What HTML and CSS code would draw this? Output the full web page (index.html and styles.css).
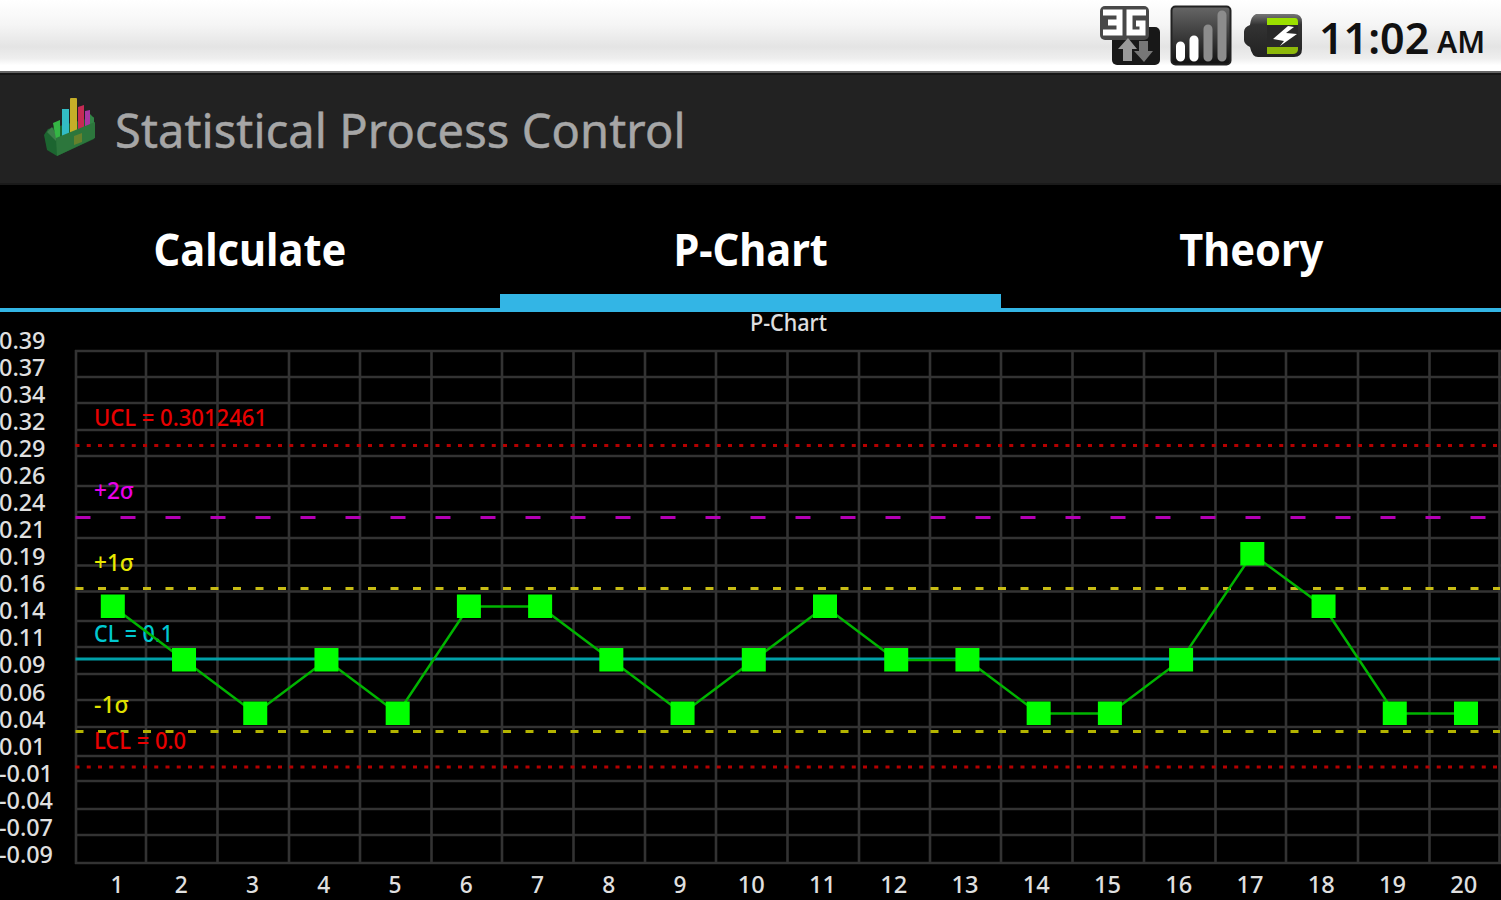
FILE: index.html
```html
<!DOCTYPE html>
<html lang="en">
<head>
    <meta charset="UTF-8">
    <meta name="viewport" content="width=device-width, initial-scale=1.0">
    <title>Statistical Process Control</title>
    <link rel="stylesheet" href="styles.css">
</head>
<body>
    <!-- Status bar -->
    <div class="status-bar">
        <svg class="status-icons" width="210" height="72" viewBox="0 0 210 72">
            <defs>
                <linearGradient id="dark" x1="0" y1="0" x2="0" y2="1">
                    <stop offset="0" stop-color="#666"/>
                    <stop offset="1" stop-color="#111"/>
                </linearGradient>
                <linearGradient id="shell" x1="0" y1="0" x2="0" y2="1">
                    <stop offset="0" stop-color="#777"/>
                    <stop offset="0.25" stop-color="#333"/>
                    <stop offset="1" stop-color="#222"/>
                </linearGradient>
            </defs>
            <!-- 3G data -->
            <rect x="12" y="27" width="48" height="38" rx="5" fill="#181818"/>
            <rect x="0" y="6" width="49" height="34" rx="5" fill="#484848"/>
            <path d="M3 12.500H19.500V32.500H3M8 22.500H19" fill="none" stroke="#fff" stroke-width="6"/>
            <path d="M46 12.500H29.500V32.500H42.500V23.500H36" fill="none" stroke="#fff" stroke-width="6"/>
            <path d="M28 38L37 49H32V61H23V49H18Z" fill="#999"/>
            <path d="M39 41H48V51H53L44 62L34 51H39Z" fill="#777"/>
            <!-- Signal -->
            <rect x="71.500" y="6.500" width="59" height="58" rx="4" fill="url(#dark)" stroke="#222" stroke-width="2"/>
            <g stroke-width="9" stroke-linecap="round">
                <path d="M80.500 46V57M94 40V57" stroke="#fff"/>
                <path d="M108 29V57M122 15V57" stroke="#8c8c8c"/>
            </g>
            <!-- Battery -->
            <path d="M156 14H194Q202 14 202 22V49Q202 57 194 57H158Q152 57 150 47Q144 44 144 40V32Q144 27 150 25Q151 16 156 14Z" fill="url(#shell)"/>
            <path d="M167 18H195Q198 18 198 22V25H167Z" fill="#9be000"/>
            <path d="M167 47H198V50Q197 54 193 54H167Z" fill="#8db80a"/>
            <rect x="167" y="25" width="31" height="22" fill="#292929"/>
            <path d="M188 26L173 39L184 41L180 46L197 34L186 33L194 27Z" fill="#fff"/>
        </svg>
        <span class="clock">11:02</span>
        <span class="meridiem">AM</span>
    </div>

    <!-- Title bar -->
    <div class="title-bar">
        <svg class="app-icon" width="54" height="62" viewBox="0 0 54 62">
            <path d="M0 39L4 33L50 21V43L13 60L3 54Z" fill="#1c6530"/>
            <path d="M3 36L8 31L12 38L12 45Z" fill="#3c7d49"/>
            <path d="M9 27L16 24V43H12Z" fill="#35b545"/>
            <rect x="18" y="13" width="7" height="28" fill="#32bcc5"/>
            <rect x="26" y="2" width="7" height="37" rx="1" fill="#c5ae28"/>
            <path d="M34 11L40 9V34H34Z" fill="#c62b54"/>
            <path d="M41 15L46 14V32H41Z" fill="#a936a2"/>
            <path d="M46 18L50 22V31H46Z" fill="#328446"/>
            <path d="M12 42L51 26V42L13 60Z" fill="#2c763c"/>
            <path d="M30 40L38 37V46L30 49Z" fill="#66812c"/>
        </svg>
        <h1>Statistical Process Control</h1>
    </div>

    <!-- Tabs -->
    <div class="tabs">
        <div class="tab"><span>Calculate</span></div>
        <div class="tab active"><span>P-Chart</span></div>
        <div class="tab"><span>Theory</span></div>
    </div>

    <svg class="chart" id="chart" width="1501" height="588" viewBox="0 312 1501 588"></svg>

    <script src="chart.js"></script>
</body>
</html>
```
FILE: styles.css
```css
/* Body styles */
body {
    margin: 0;
    background: #000;
    color: #fff;
    font-family: "Noto Sans", "Open Sans", sans-serif;
    overflow: hidden;
}

/* Status bar */
.status-bar {
    box-sizing: border-box;
    height: 73px;
    display: flex;
    justify-content: flex-end;
    padding-right: 15px;
    background: linear-gradient(#fff 0%, #f5f5f5 35%, #e4e4e4 66%, #eee 82%, #fff 92%);
    border-bottom: 2px solid #666;
    color: #111;
    line-height: 75px;
}

.status-icons {
    margin-right: 9px;
}

.clock {
    width: 112px;
    font-size: 43px;
    font-weight: 600;
    white-space: nowrap;
}

.meridiem {
    width: 49px;
    margin-left: 6px;
    font-size: 30px;
    font-weight: 600;
    line-height: 83px;
}

/* Title bar */
.title-bar {
    box-sizing: border-box;
    height: 112px;
    display: flex;
    align-items: center;
    padding-left: 44px;
    background: #222;
    border-top: 2px solid #161616;
    border-bottom: 2px solid #1a1a1a;
}

.app-icon {
    margin-top: -4px;
}

h1 {
    margin: 0 0 0 17px;
    font-size: 47px;
    font-weight: 400;
    letter-spacing: 0.1px;
    line-height: 64px;
    padding-top: 2px;
    color: #a6a6a6;
    -webkit-text-stroke: 0.5px #a6a6a6;
    white-space: nowrap;
}

/* Tabs */
.tabs {
    box-sizing: border-box;
    height: 127px;
    display: flex;
    border-bottom: 4px solid #33b5e5;
}

.tab {
    box-sizing: border-box;
    flex: 1;
    height: 123px;
    border-bottom: 14px solid transparent;
    font-size: 44px;
    font-weight: 700;
    line-height: 128px;
    text-align: center;
}

.tab.active {
    border-bottom-color: #33b5e5;
}

.tab span {
    display: inline-block;
    transform: scaleX(0.945);
}

/* Chart */
.chart {
    display: block;
    overflow: visible;
}

.chart text {
    font-size: 23.5px;
    font-weight: 500;
}

.grid {
    stroke: #333;
    stroke-width: 2.6;
}

.axis {
    fill: #e0e0e0;
}

.series {
    fill: none;
    stroke: #00b400;
    stroke-width: 2.5;
}

.point {
    fill: #0f0;
}
```
FILE: chart.js
```javascript
const chart = document.getElementById('chart');

const xs = [76, 146, 217.5, 289, 360, 431.5, 502, 573.5, 645, 716, 787.5, 859, 930, 1001, 1072.5, 1144, 1215.5, 1286, 1358, 1429.5, 1499.5];
const ys = [351, 377, 403, 430, 456, 486, 512, 538, 565.5, 591.5, 621, 647, 674, 700, 727, 756, 781, 809, 835, 863];

const yLabels = ['0.39', '0.37', '0.34', '0.32', '0.29', '0.26', '0.24', '0.21', '0.19', '0.16', '0.14', '0.11', '0.09', '0.06', '0.04', '0.01', '-0.01', '-0.04', '-0.07', '-0.09'];
const samples = [3, 2, 1, 2, 1, 3, 3, 2, 1, 2, 3, 2, 2, 1, 1, 2, 4, 3, 1, 1];
const levels = { 1: 713.5, 2: 660, 3: 606.5, 4: 554 };

// Control limits: label, label width, label baseline, line y, colours, dash pattern
const limits = [
    ['UCL = 0.3012461', 173, 426, 445.5, '#e80000', '#b40000', '4 7.25'],
    ['+2σ', 40, 499, 517.5, '#e800e8', '#b400b4', '15 30'],
    ['+1σ', 40, 571, 588.5, '#e8e800', '#c8bc14', '8 14.5'],
    ['CL = 0.1', 79, 642, 659, '#00c8d0', '#00a0a8', ''],
    ['-1σ', 35, 713, 731.5, '#e0e000', '#b4b400', '8 14.5'],
    ['LCL = 0.0', 92, 749, 767, '#e80000', '#b40000', '4 7.25']
];

function add(tag, attrs, text) {
    const el = document.createElementNS('http://www.w3.org/2000/svg', tag);
    for (const key in attrs) el.setAttribute(key, attrs[key]);
    if (text) el.textContent = text;
    chart.appendChild(el);
}

function label(text, x, y, width, attrs) {
    add('text', { x: x, y: y, textLength: width, lengthAdjust: 'spacingAndGlyphs', ...attrs }, text);
}

// Grid
xs.forEach(x => add('line', { x1: x, y1: 350, x2: x, y2: 864, class: 'grid' }));
ys.forEach(y => add('line', { x1: 75, y1: y, x2: 1501, y2: y, class: 'grid' }));

// Title and axis labels
label('P-Chart', 750, 331, 77, { class: 'axis' });
yLabels.forEach((text, i) => {
    label(text, -1, 349 + i * 27.04, text[0] === '-' ? 54 : 46.5, { class: 'axis' });
});
for (let i = 0; i < 20; i++) {
    const wide = i > 8;
    label(String(i + 1), (i === 0 ? 117 : 110 + i * 71.25) - (wide ? 13.5 : 6.5), 893, wide ? 27 : 13, { class: 'axis' });
}

// Limit lines
limits.forEach(([text, width, baseline, y, color, line, dash]) => {
    add('line', { x1: 75.5, y1: y, x2: 1500, y2: y, stroke: line, 'stroke-width': 3, 'stroke-dasharray': dash });
    label(text, 94, baseline, width, { fill: color });
});

// Data series
const points = samples.map((n, i) => [112.8 + i * 71.22, levels[n]]);
add('polyline', { points: points.map(p => p.join(',')).join(' '), class: 'series' });
points.forEach(([x, y]) => add('rect', { x: x - 12, y: y - 12, width: 24, height: 23.5, class: 'point' }));
```
